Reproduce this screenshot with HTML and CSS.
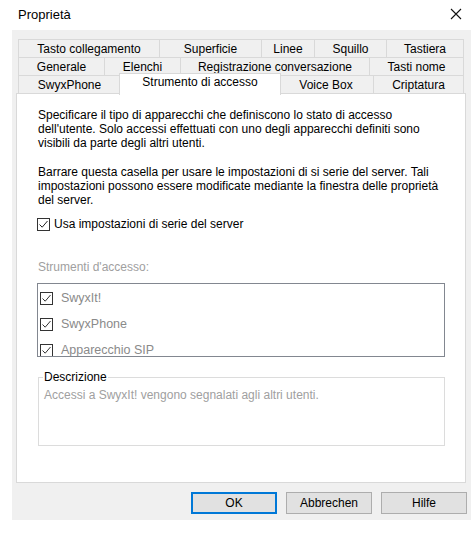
FILE: index.html
```html
<!DOCTYPE html>
<html lang="it">
<head>
    <meta charset="UTF-8">
    <meta name="viewport" content="width=device-width, initial-scale=1.0">
    <title>Proprietà</title>
    <link rel="stylesheet" href="styles.css">
</head>
<body>
    <div class="titlebar">
        <span class="title">Proprietà</span>
        <svg class="close" width="12" height="12" viewBox="0 0 12 12">
            <path d="M1 1 L11 11 M11 1 L1 11" stroke="#111" stroke-width="1.1" fill="none"/>
        </svg>
    </div>

    <div class="dialog">
        <div class="tabs">
            <div class="tab-row row-1">
                <div class="tab">Tasto collegamento</div>
                <div class="tab">Superficie</div>
                <div class="tab">Linee</div>
                <div class="tab">Squillo</div>
                <div class="tab">Tastiera</div>
            </div>
            <div class="tab-row row-2">
                <div class="tab">Generale</div>
                <div class="tab">Elenchi</div>
                <div class="tab">Registrazione conversazione</div>
                <div class="tab">Tasti nome</div>
            </div>
            <div class="tab-row row-3">
                <div class="tab">SwyxPhone</div>
                <div class="tab active">Strumento di accesso</div>
                <div class="tab">Voice Box</div>
                <div class="tab">Criptatura</div>
            </div>
        </div>

        <div class="panel">
            <p class="text">Specificare il tipo di apparecchi che definiscono lo stato di accesso dell'utente. Solo accessi effettuati con uno degli apparecchi definiti sono visibili da parte degli altri utenti.</p>
            <p class="text second">Barrare questa casella per usare le impostazioni di si serie del server. Tali impostazioni possono essere modificate mediante la finestra delle proprietà del server.</p>

            <label class="check-row">
                <span class="box">
                    <svg width="11" height="11" viewBox="0 0 11 11"><path d="M1.5 5.5 L4.2 8.2 L9.5 2" stroke="#222" stroke-width="1" fill="none"/></svg>
                </span>
                Usa impostazioni di serie del server
            </label>

            <div class="field-label">Strumenti d'accesso:</div>
            <div class="listbox">
                <div class="list-item">
                    <span class="box">
                        <svg width="11" height="11" viewBox="0 0 11 11"><path d="M1.5 5.5 L4.2 8.2 L9.5 2" stroke="#333" stroke-width="1" fill="none"/></svg>
                    </span>
                    SwyxIt!
                </div>
                <div class="list-item">
                    <span class="box">
                        <svg width="11" height="11" viewBox="0 0 11 11"><path d="M1.5 5.5 L4.2 8.2 L9.5 2" stroke="#333" stroke-width="1" fill="none"/></svg>
                    </span>
                    SwyxPhone
                </div>
                <div class="list-item">
                    <span class="box">
                        <svg width="11" height="11" viewBox="0 0 11 11"><path d="M1.5 5.5 L4.2 8.2 L9.5 2" stroke="#333" stroke-width="1" fill="none"/></svg>
                    </span>
                    Apparecchio SIP
                </div>
            </div>

            <fieldset class="group">
                <legend>Descrizione</legend>
                <div class="desc">Accessi a SwyxIt! vengono segnalati agli altri utenti.</div>
            </fieldset>
        </div>

        <div class="actions">
            <button class="btn default">OK</button>
            <button class="btn">Abbrechen</button>
            <button class="btn">Hilfe</button>
        </div>
    </div>
</body>
</html>
```

FILE: styles.css
```css
body {
    margin: 0;
    width: 473px;
    height: 535px;
    background-color: #fff;
    font-family: "Liberation Sans", Arial, sans-serif;
    font-size: 12px;
    color: #000;
    overflow: hidden;
}
.titlebar {
    height: 30px;
    display: flex;
    align-items: center;
    justify-content: space-between;
    padding: 0 11px 0 18px;
    box-sizing: border-box;
}
.title {
    font-size: 13px;
    margin-top: -2px;
}
.close {
    margin-top: -2px;
}
.dialog {
    margin-left: 12px;
    width: 459px;
    height: 490px;
    padding: 9px 0 0 4px;
    box-sizing: border-box;
    background-color: #f0f0f0;
}
.tabs {
    margin: 0 2px;
    width: 446px;
}
.tab-row {
    display: grid;
    height: 18px;
}
.row-1 {
    grid-template-columns: 142px 102px 53px 72px 77px;
}
.row-2 {
    grid-template-columns: 87px 76px 189px 94px;
}
.row-3 {
    grid-template-columns: 103px 158px 95px 90px;
}
.tab {
    border-top: 1px solid #d9d9d9;
    border-right: 1px solid #d9d9d9;
    text-align: center;
    line-height: 18px;
    white-space: nowrap;
    color: #000;
}
.tab:first-child {
    border-left: 1px solid #d9d9d9;
}
.tab.active {
    position: relative;
    z-index: 1;
    margin: -2px -2px -1px;
    border-left: 1px solid #d9d9d9;
    background-color: #fff;
    line-height: 17px;
}
.panel {
    width: 450px;
    height: 390px;
    box-sizing: border-box;
    border: 1px solid #d9d9d9;
    background-color: #fff;
    padding: 14px 20px 0 21px;
}
.text {
    margin: 0;
    line-height: 14px;
}
.text.second {
    margin-top: 15px;
}
.check-row {
    display: flex;
    align-items: center;
    gap: 4px;
    margin: 10px 0 0 -1px;
    line-height: 14px;
}
.box {
    width: 13px;
    height: 13px;
    box-sizing: border-box;
    border: 1px solid #333;
    background-color: #fff;
    display: flex;
    align-items: center;
    justify-content: center;
}
.field-label {
    margin-top: 29px;
    line-height: 14px;
    color: #a0a0a0;
}
.listbox {
    margin: 9px 0 0 -1px;
    width: 408px;
    height: 74px;
    box-sizing: border-box;
    border: 1px solid #828790;
    padding: 1px 0 0 2px;
    overflow: hidden;
}
.list-item {
    height: 26px;
    display: flex;
    align-items: center;
    gap: 8px;
    color: #8a8a8a;
    font-size: 12.5px;
}
.group {
    margin: 13px 0 0 0;
    width: 407px;
    height: 76px;
    box-sizing: border-box;
    border: 1px solid #dcdcdc;
    padding: 4px 5px 0 5px;
}
.group legend {
    padding: 0 1px;
    margin-left: -1px;
    line-height: 14px;
    color: #000;
}
.desc {
    color: #a0a0a0;
    line-height: 14px;
}
.actions {
    width: 451px;
    display: flex;
    justify-content: flex-end;
    gap: 9px;
    margin-top: 9px;
}
.btn {
    width: 86px;
    height: 22px;
    padding: 0;
    font-family: "Liberation Sans", Arial, sans-serif;
    font-size: 12px;
    color: #000;
    background-color: #e1e1e1;
    border: 1px solid #adadad;
}
.btn.default {
    border-color: #0078d7;
    box-shadow: inset 0 0 0 1px #0078d7;
}
```
